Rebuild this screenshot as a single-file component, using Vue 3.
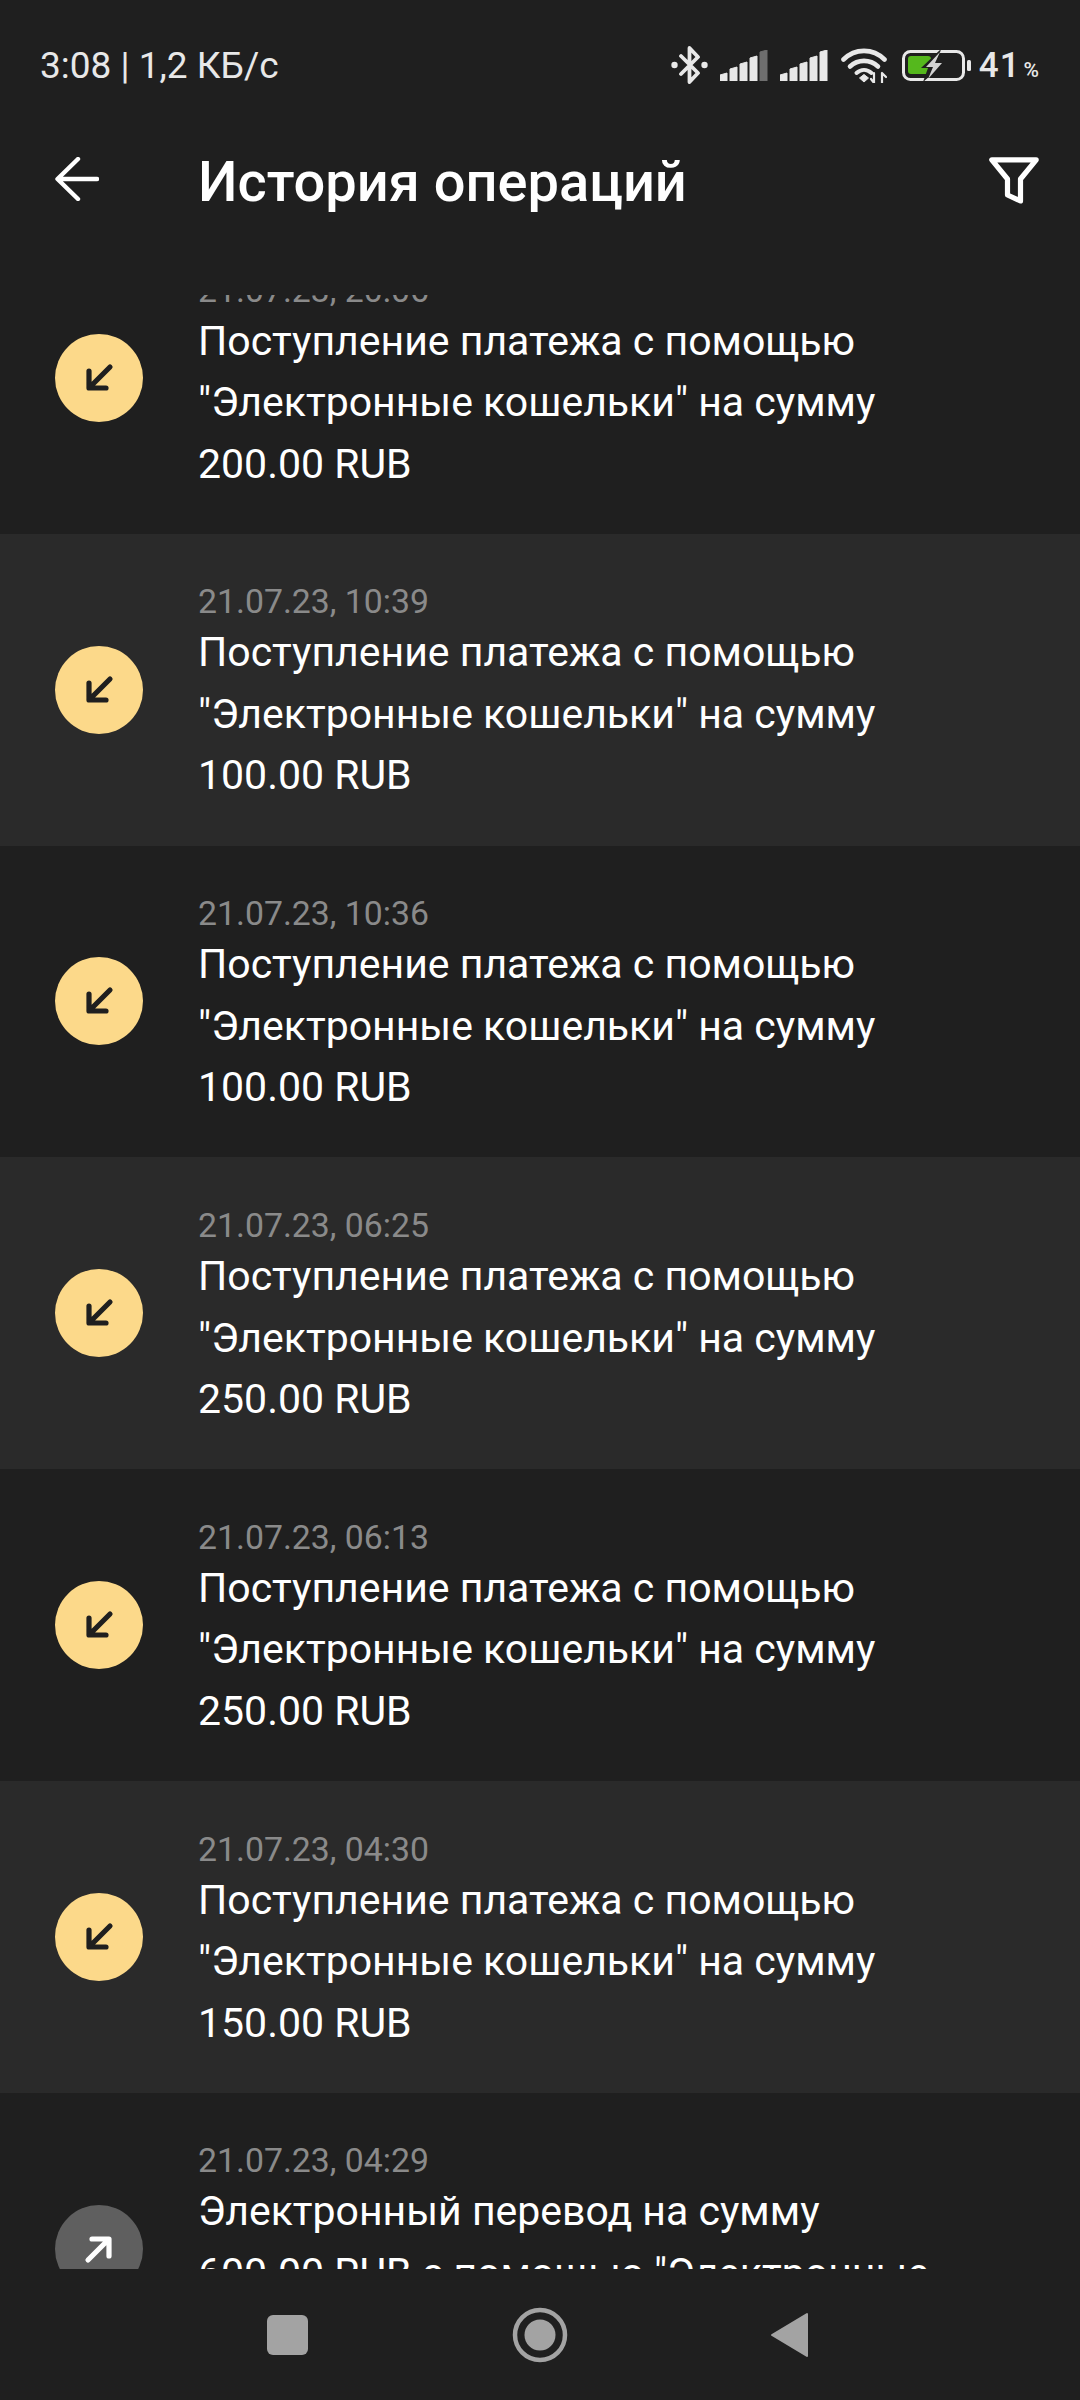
<script setup>
    // Operaciones visibles en la lista
    const income = (date, amount) => ({
        date,
        lines: ['Поступление платежа с помощью', '"Электронные кошельки" на сумму', `${amount} RUB`],
        out: false,
    });

    const operations = [
        income('21.07.23, 20:06', '200.00'),
        income('21.07.23, 10:39', '100.00'),
        income('21.07.23, 10:36', '100.00'),
        income('21.07.23, 06:25', '250.00'),
        income('21.07.23, 06:13', '250.00'),
        income('21.07.23, 04:30', '150.00'),
        {
            date: '21.07.23, 04:29',
            lines: ['Электронный перевод на сумму', '600.00 RUB с помощью "Электронные', 'кошельки"'],
            out: true,
        },
    ];

    // Barras de señal con la parte superior inclinada
    const signalBars = [8, 14, 19, 25, 31].map((h, i) => {
        const x = i * 10;
        return `M${x} 31 V${33 - h} L${x + 7} ${31 - h} V31 Z`;
    });
</script>

<template>
    <div class="screen">

        <div class="status-bar">
            <span class="status-time">3:08 | 1,2 КБ/с</span>
            <div class="status-icons">
                <svg class="ic-bluetooth" width="37" height="38" viewBox="0 0 37 38">
                    <path d="M10 10 L27 27 L18.500 36 L18.500 2 L27 11 L10 28" fill="none" stroke="#e8e8e8" stroke-width="3.800" stroke-linecap="round" stroke-linejoin="round"/>
                    <circle cx="3.500" cy="19" r="3.200" fill="#e8e8e8"/>
                    <circle cx="33.500" cy="19" r="3.200" fill="#e8e8e8"/>
                </svg>
                <svg class="ic-signal" width="48" height="31" viewBox="0 0 48 31">
                    <path v-for="(bar, i) in signalBars" :key="i" :d="bar" :fill="i === 4 ? '#6e6e6e' : '#e8e8e8'" :stroke="i === 4 ? '#6e6e6e' : '#e8e8e8'" stroke-width="1" stroke-linejoin="round"/>
                </svg>
                <svg class="ic-signal" width="48" height="31" viewBox="0 0 48 31">
                    <path v-for="(bar, i) in signalBars" :key="i" :d="bar" fill="#e8e8e8" stroke="#e8e8e8" stroke-width="1" stroke-linejoin="round"/>
                </svg>
                <svg class="ic-wifi" width="46" height="35" viewBox="0 0 46 35">
                    <path d="M2.500 11.500 C14 0 32 0 43.500 11.500" fill="none" stroke="#e8e8e8" stroke-width="4.600" stroke-linecap="round"/>
                    <path d="M9 18.500 C17 11 29 11 37 18.500" fill="none" stroke="#e8e8e8" stroke-width="4.600" stroke-linecap="round"/>
                    <path d="M15.500 25 C20 21 26 21 30.500 25" fill="none" stroke="#e8e8e8" stroke-width="4" stroke-linecap="round"/>
                    <path d="M18.500 30 L23 26.500 L27.500 30 L23 34 Z" fill="#e8e8e8" stroke="#e8e8e8" stroke-linejoin="round"/>
                    <path d="M33 25 V35 M30 31 L33 35 M41 25 V35 M41 25 L45 29" fill="none" stroke="#e8e8e8" stroke-width="2.200" stroke-linecap="round"/>
                </svg>
                <svg class="ic-battery" width="69" height="31" viewBox="0 0 69 31">
                    <rect x="1.500" y="1.500" width="60" height="28" rx="7" fill="none" stroke="#e8e8e8" stroke-width="3"/>
                    <rect x="6" y="6" width="23" height="18" rx="3" fill="#55b81d"/>
                    <rect x="65" y="10" width="4" height="11" rx="1.500" fill="#e8e8e8"/>
                    <path d="M39 -1 L19 18 L26 18 L21 32 L43 13 L35 13 Z" fill="#1f1f1f"/>
                    <path d="M38 2 L24 17 L31 17 L26 29 L40 13 L33 13 Z" fill="#d4d4d4"/>
                </svg>
                <span class="status-level">41<small>%</small></span>
            </div>
        </div>

        <div class="top-bar">
            <svg class="ic-back" width="44" height="44" viewBox="0 0 44 44">
                <path d="M42 22 H3 M23 2 L2.500 22 L23 42" fill="none" stroke="#fff" stroke-width="4.400" stroke-linecap="round" stroke-linejoin="round"/>
            </svg>
            <h1 class="top-title">История операций</h1>
            <svg class="ic-filter" width="50" height="47" viewBox="0 0 50 47">
                <path d="M2.800 2.800 H47.200 L31.500 22 V44 L18.500 38 V22 Z" fill="none" stroke="#fff" stroke-width="5.200" stroke-linejoin="round"/>
            </svg>
        </div>

        <div class="list">
            <div class="list-inner">
                <div v-for="(op, i) in operations" :key="i" class="row" :class="{ 'row-alt': i % 2 === 1 }">
                    <div class="badge" :class="{ 'badge-out': op.out }">
                        <svg width="30" height="30" viewBox="0 0 30 30">
                            <path v-if="op.out" d="M4 26 L24 6 M8 5 H25 V22" fill="none" stroke="#fff" stroke-width="5.200" stroke-linecap="round" stroke-linejoin="round"/>
                            <path v-else d="M26 4 L6 24 M5 8 V25 H22" fill="none" stroke="#1f1f1f" stroke-width="5.200" stroke-linecap="round" stroke-linejoin="round"/>
                        </svg>
                    </div>
                    <div class="row-body">
                        <div class="row-date">{{ op.date }}</div>
                        <div v-for="line in op.lines" :key="line" class="row-line">{{ line }}</div>
                    </div>
                </div>
            </div>
        </div>

        <div class="nav-bar">
            <svg width="42" height="40" viewBox="0 0 42 40"><rect width="41" height="40" rx="6" fill="#a3a3a3"/></svg>
            <svg width="56" height="56" viewBox="0 0 56 56">
                <circle cx="28" cy="28" r="25" fill="none" stroke="#a3a3a3" stroke-width="4.500"/>
                <circle cx="28" cy="28" r="15.500" fill="#a3a3a3"/>
            </svg>
            <svg width="39" height="46" viewBox="0 0 39 46">
                <path d="M37 2 V44 L2 23 Z" fill="#a3a3a3" stroke="#a3a3a3" stroke-width="2" stroke-linejoin="round"/>
            </svg>
        </div>

    </div>
</template>

<style scoped>
    .screen {
        display: flex;
        flex-direction: column;
        width: 1080px;
        height: 2400px;
        overflow: hidden;
        background: #1f1f1f;
        font-family: Roboto, "Noto Sans", sans-serif;
        color: #fff;
    }

    .status-bar {
        box-sizing: border-box;
        flex: none;
        display: flex;
        align-items: center;
        justify-content: space-between;
        height: 130px;
        padding: 0 41px 0 40px;
        color: #e8e8e8;
    }

    .status-time {
        font-size: 37px;
    }

    .status-icons {
        display: flex;
        align-items: center;
    }

    .ic-signal {
        margin-left: 12px;
    }

    .ic-wifi {
        margin-left: 13px;
    }

    .ic-battery {
        margin-left: 15px;
    }

    .status-level {
        margin-left: 8px;
        font-size: 35px;
        font-weight: 500;
        letter-spacing: 1px;
    }

    .status-level small {
        margin-left: 3px;
        font-size: 21px;
        font-weight: 500;
        letter-spacing: 0;
    }

    .top-bar {
        box-sizing: border-box;
        flex: none;
        display: flex;
        align-items: flex-start;
        height: 165px;
        padding: 27px 41px 0 55px;
    }

    .top-title {
        flex: 1;
        margin: -5px 0 0 99px;
        font-size: 56px;
        line-height: 60px;
        font-weight: 500;
    }

    .list {
        flex: 1;
        min-height: 0;
        overflow: hidden;
    }

    .list-inner {
        margin-top: -73px;
    }

    .row {
        box-sizing: border-box;
        display: flex;
        align-items: center;
        height: 311.800px;
        padding-left: 55px;
    }

    .row-alt {
        background: #2a2a2a;
    }

    .badge {
        flex: none;
        display: flex;
        align-items: center;
        justify-content: center;
        width: 88px;
        height: 88px;
        border-radius: 50%;
        background: #fcd98a;
    }

    .badge-out {
        background: #5f5f5f;
    }

    .row-body {
        margin-left: 55px;
        padding-top: 10px;
    }

    .row-date {
        font-size: 33.800px;
        line-height: 40px;
        color: #8a8a8a;
    }

    .row-line {
        font-size: 41px;
        line-height: 61.500px;
        white-space: nowrap;
    }

    .nav-bar {
        box-sizing: border-box;
        flex: none;
        display: flex;
        align-items: center;
        justify-content: space-between;
        height: 131px;
        padding: 0 271px 0 267px;
    }
</style>
